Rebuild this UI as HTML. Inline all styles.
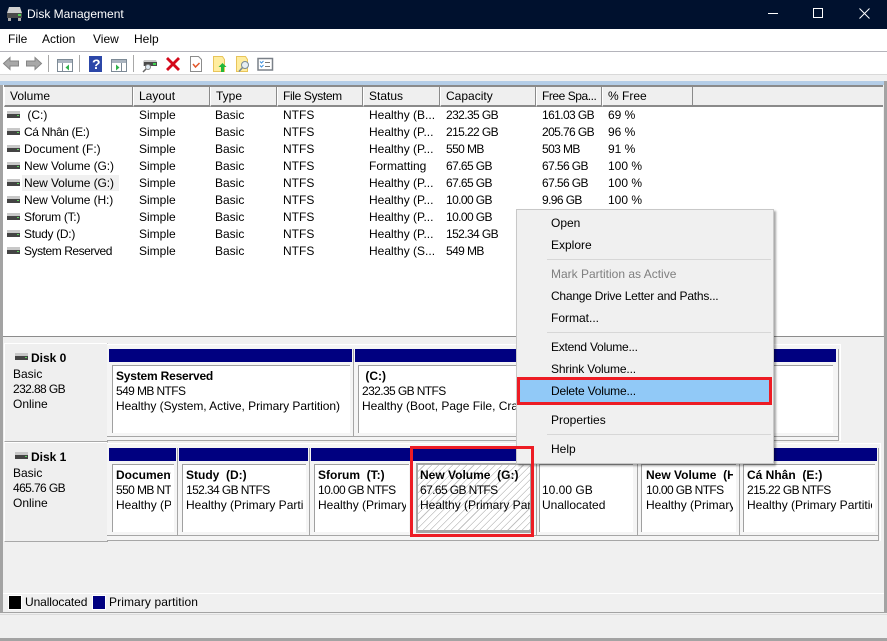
<!DOCTYPE html>
<html><head><meta charset="utf-8"><style>
html,body{margin:0;padding:0}
body{width:887px;height:641px;overflow:hidden;position:relative;background:#f0f0f0;font:12px/15px "Liberation Sans",sans-serif;color:#000}
div,svg{position:absolute}
.t{white-space:nowrap}
.h{top:87px;height:18px;background:#efefef;border-right:1px solid #8a8a8a;border-left:1px solid #fff;border-bottom:2px solid #8a8a8a;line-height:18px;white-space:nowrap;text-indent:5px}
.c{white-space:nowrap;height:15px}
.n{letter-spacing:-.6px}
.nv{background:#000080;height:13px}
.p{background:#fff;overflow:hidden;white-space:nowrap;border-left:1px solid #a0a0a0;border-top:1px solid #a0a0a0;box-sizing:border-box}
.p span{position:absolute;left:3px;right:3px;height:15px;overflow:hidden}
.v{position:absolute;width:1px;background:#a6a6a6}
.m{position:absolute;left:34px;white-space:nowrap}
.sp{position:absolute;left:30px;right:2px;height:1px;background:#d7d7d7}
</style></head><body>
<div style="left:0;top:0;width:887px;height:29px;background:#00112e"></div>
<svg style="left:6px;top:6px" width="17" height="16" viewBox="0 0 17 16"><path d="M3 1h11l2 6v3H1V7z" fill="#cfcfcf"/><rect x="1" y="7" width="15" height="5" fill="#4a4a4a"/><rect x="12" y="8" width="3" height="2" fill="#4fd04f"/><rect x="2" y="12" width="3" height="3" fill="#aaa"/><rect x="12" y="12" width="3" height="3" fill="#aaa"/></svg>
<div class="t" style="left:27px;top:6px;color:#fff;font-size:12px;line-height:16px">Disk Management</div>
<div style="left:768px;top:13px;width:10px;height:1px;background:#fff"></div>
<div style="left:813px;top:8px;width:8px;height:8px;border:1px solid #fff"></div>
<svg style="left:859px;top:8px" width="11" height="11"><path d="M.5.5l10 10M10.500.5l-10 10" stroke="#fff" fill="none"/></svg>

<div style="left:0;top:29px;width:887px;height:22px;background:#fff"></div>
<div class="t" style="left:8px;top:32px">File</div>
<div class="t" style="left:42px;top:32px">Action</div>
<div class="t" style="left:93px;top:32px">View</div>
<div class="t" style="left:134px;top:32px">Help</div>
<div style="left:0;top:51px;width:887px;height:1px;background:#b4b4bb"></div>
<div style="left:0;top:52px;width:887px;height:22px;background:#fff"></div>
<div style="left:0;top:74px;width:887px;height:1px;background:#d9d9d9"></div>

<svg style="left:0;top:52px" width="290" height="22" viewBox="0 0 290 22">
<path d="M3.500 11.500l6.500-6v3.500h8.500v5H10v3.500z" fill="#a8a8a8" stroke="#858585"/>
<path d="M41.500 11.500l-6.500-6v3.500h-8.500v5H35v3.500z" fill="#a8a8a8" stroke="#858585"/>
<path d="M48.500 3v17M79.500 3v17M133.500 3v17" stroke="#a8a8a8"/>
<rect x="57.500" y="7.500" width="15" height="12" fill="#fff" stroke="#7d8a96"/><rect x="58" y="8" width="14" height="3" fill="#aab4bf"/><path d="M62.500 11v8" stroke="#7d8a96"/><path d="M69 12.500v6l-3.500-3z" fill="#2fb04a"/>
<rect x="89" y="4" width="13" height="16" fill="#2c47a8"/><text x="92" y="17" fill="#fff" font-size="14" font-weight="bold" font-family="Liberation Sans">?</text>
<rect x="111.500" y="7.500" width="15" height="12" fill="#fff" stroke="#7d8a96"/><rect x="112" y="8" width="14" height="3" fill="#aab4bf"/><path d="M121.500 11v8" stroke="#7d8a96"/><path d="M116 12.500v6l3.500-3z" fill="#2fb04a"/>
<path d="M144 8h12l1 2v4h-14v-4z" fill="#c6c6c6"/><rect x="144" y="10" width="13" height="4" fill="#4a4a4a"/><rect x="153" y="11" width="3" height="2" fill="#3fd64f"/><circle cx="148" cy="15" r="2.500" fill="#dfeaf2" stroke="#888"/><path d="M146 17l-3 3" stroke="#666" stroke-width="1.500"/>
<path d="M168 5l5 5 5-5 2 2-5 5 5 5-2 2-5-5-5 5-2-2 5-5-5-5z" fill="#d4091b"/>
<path d="M190.500 4.500h8l3 3v12h-11z" fill="#fff" stroke="#8c8c8c"/><path d="M193 12l2.500 3 4-4" stroke="#e2572b" stroke-width="1.500" fill="none"/>
<path d="M213.500 4.500h9l2 3v12h-11z" fill="#ffed9f" stroke="#e8c45a"/><path d="M222.500 11l4 4H224v5h-3v-5h-2.500z" fill="#22b83a"/>
<path d="M236.500 4.500h9l2 3v12h-11z" fill="#ffed9f" stroke="#e8c45a"/><circle cx="245" cy="13" r="3.500" fill="#e6eef3" stroke="#7a8a94"/><path d="M242.500 15.500l-3.500 4" stroke="#7a8a94" stroke-width="1.500"/>
<rect x="258" y="6.500" width="14.500" height="11.500" fill="#fff" stroke="#7a8088" stroke-width="1.500"/><path d="M260 9.500l1.500 1.500 2-2M260 13.500l1.500 1.500 2-2" stroke="#3b8fdd" fill="none"/><path d="M265 10.500h5M265 14.500h5" stroke="#777"/>
</svg>

<div style="left:0;top:81px;width:3px;height:531px;background:#a3a3a3"></div>
<div style="left:884px;top:81px;width:3px;height:531px;background:#a3a3a3"></div>
<div style="left:0;top:81px;width:884px;height:4px;background:#b4cde7"></div>
<div style="left:3px;top:85px;width:880px;height:251px;background:#fff"></div>
<div style="left:4px;top:85px;width:879px;height:2px;background:#8a8a8a"></div>
<div style="left:4px;top:87px;width:879px;height:18px;background:#efefef;border-bottom:2px solid #8a8a8a"></div>
<div class="h" style="left:4px;width:127px">Volume</div>
<div class="h" style="left:133px;width:75px">Layout</div>
<div class="h" style="left:210px;width:65px">Type</div>
<div class="h" style="left:277px;width:84px;letter-spacing:-.35px">File System</div>
<div class="h" style="left:363px;width:75px">Status</div>
<div class="h" style="left:440px;width:94px">Capacity</div>
<div class="h" style="left:536px;width:64px;letter-spacing:-.45px">Free Spa...</div>
<div class="h" style="left:602px;width:89px">% Free</div>

<div style="left:22px;top:175px;width:97px;height:16px;background:#f0f0f0"></div>
<svg style="left:7px;top:108px" width="14" height="150" viewBox="0 0 14 150">
<g id="d"><rect y="3" width="13" height="3" fill="#c8c8c8"/><rect y="6" width="13" height="4" fill="#444"/><rect x="10" y="7" width="2" height="1" fill="#5fd05f"/></g>
<use href="#d" y="17"/><use href="#d" y="34"/><use href="#d" y="51"/><use href="#d" y="68"/><use href="#d" y="85"/><use href="#d" y="102"/><use href="#d" y="119"/><use href="#d" y="136"/>
</svg>

<div class="c" style="left:24px;top:108px">&nbsp;(C:)</div><div class="c" style="left:139px;top:108px">Simple</div><div class="c" style="left:215px;top:108px">Basic</div><div class="c" style="left:283px;top:108px">NTFS</div><div class="c" style="left:369px;top:108px">Healthy (B...</div><div class="c n" style="left:446px;top:108px">232.35 GB</div><div class="c n" style="left:542px;top:108px">161.03 GB</div><div class="c" style="left:608px;top:108px">69 %</div>
<div class="c" style="left:24px;top:125px;letter-spacing:-.4px">Cá Nhân (E:)</div><div class="c" style="left:139px;top:125px">Simple</div><div class="c" style="left:215px;top:125px">Basic</div><div class="c" style="left:283px;top:125px">NTFS</div><div class="c" style="left:369px;top:125px">Healthy (P...</div><div class="c n" style="left:446px;top:125px">215.22 GB</div><div class="c n" style="left:542px;top:125px">205.76 GB</div><div class="c" style="left:608px;top:125px">96 %</div>
<div class="c" style="left:24px;top:142px">Document (F:)</div><div class="c" style="left:139px;top:142px">Simple</div><div class="c" style="left:215px;top:142px">Basic</div><div class="c" style="left:283px;top:142px">NTFS</div><div class="c" style="left:369px;top:142px">Healthy (P...</div><div class="c n" style="left:446px;top:142px">550 MB</div><div class="c n" style="left:542px;top:142px">503 MB</div><div class="c" style="left:608px;top:142px">91 %</div>
<div class="c" style="left:24px;top:159px;letter-spacing:-.1px">New Volume (G:)</div><div class="c" style="left:139px;top:159px">Simple</div><div class="c" style="left:215px;top:159px">Basic</div><div class="c" style="left:283px;top:159px">NTFS</div><div class="c" style="left:369px;top:159px">Formatting</div><div class="c n" style="left:446px;top:159px">67.65 GB</div><div class="c n" style="left:542px;top:159px">67.56 GB</div><div class="c" style="left:608px;top:159px">100 %</div>
<div class="c" style="left:24px;top:176px;letter-spacing:-.1px">New Volume (G:)</div><div class="c" style="left:139px;top:176px">Simple</div><div class="c" style="left:215px;top:176px">Basic</div><div class="c" style="left:283px;top:176px">NTFS</div><div class="c" style="left:369px;top:176px">Healthy (P...</div><div class="c n" style="left:446px;top:176px">67.65 GB</div><div class="c n" style="left:542px;top:176px">67.56 GB</div><div class="c" style="left:608px;top:176px">100 %</div>
<div class="c" style="left:24px;top:193px;letter-spacing:-.1px">New Volume (H:)</div><div class="c" style="left:139px;top:193px">Simple</div><div class="c" style="left:215px;top:193px">Basic</div><div class="c" style="left:283px;top:193px">NTFS</div><div class="c" style="left:369px;top:193px">Healthy (P...</div><div class="c n" style="left:446px;top:193px">10.00 GB</div><div class="c n" style="left:542px;top:193px">9.96 GB</div><div class="c" style="left:608px;top:193px">100 %</div>
<div class="c" style="left:24px;top:210px;letter-spacing:-.3px">Sforum (T:)</div><div class="c" style="left:139px;top:210px">Simple</div><div class="c" style="left:215px;top:210px">Basic</div><div class="c" style="left:283px;top:210px">NTFS</div><div class="c" style="left:369px;top:210px">Healthy (P...</div><div class="c n" style="left:446px;top:210px">10.00 GB</div>
<div class="c" style="left:24px;top:227px;letter-spacing:-.3px">Study (D:)</div><div class="c" style="left:139px;top:227px">Simple</div><div class="c" style="left:215px;top:227px">Basic</div><div class="c" style="left:283px;top:227px">NTFS</div><div class="c" style="left:369px;top:227px">Healthy (P...</div><div class="c n" style="left:446px;top:227px">152.34 GB</div>
<div class="c" style="left:24px;top:244px;letter-spacing:-.45px">System Reserved</div><div class="c" style="left:139px;top:244px">Simple</div><div class="c" style="left:215px;top:244px">Basic</div><div class="c" style="left:283px;top:244px">NTFS</div><div class="c" style="left:369px;top:244px">Healthy (S...</div><div class="c n" style="left:446px;top:244px">549 MB</div>

<div style="left:3px;top:336px;width:881px;height:1px;background:#8c8c8c"></div>

<!-- disk labels -->
<div style="left:4px;top:343px;width:102px;height:97px;background:#efefef;border-top:1px solid #fff;border-left:1px solid #fff;border-right:1px solid #a8a8a8;border-bottom:1px solid #a8a8a8"></div>
<div style="left:4px;top:442px;width:102px;height:98px;background:#efefef;border-top:1px solid #fff;border-left:1px solid #fff;border-right:1px solid #a8a8a8;border-bottom:1px solid #a8a8a8"></div>
<svg style="left:15px;top:353px" width="14" height="8"><rect width="13" height="3" fill="#c8c8c8"/><rect y="3" width="13" height="4" fill="#444"/><rect x="10" y="4" width="2" height="1" fill="#5fd05f"/></svg>
<svg style="left:15px;top:452px" width="14" height="8"><rect width="13" height="3" fill="#c8c8c8"/><rect y="3" width="13" height="4" fill="#444"/><rect x="10" y="4" width="2" height="1" fill="#5fd05f"/></svg>
<div class="t" style="left:31px;top:351px;font-weight:bold">Disk 0</div>
<div class="t" style="left:13px;top:367px">Basic</div><div class="t n" style="left:13px;top:382px">232.88 GB</div><div class="t" style="left:13px;top:397px">Online</div>
<div class="t" style="left:31px;top:450px;font-weight:bold">Disk 1</div>
<div class="t" style="left:13px;top:466px">Basic</div><div class="t n" style="left:13px;top:481px">465.76 GB</div><div class="t" style="left:13px;top:496px">Online</div>

<!-- disk 0 map -->
<div style="left:107px;top:344px;width:733px;height:96px;background:#f5f5f5;border-top:1px solid #fff;border-right:1px solid #fff"></div>
<div class="v" style="left:353px;top:349px;height:88px"></div>
<div class="v" style="left:838px;top:349px;height:92px"></div>
<div style="left:107px;top:436px;width:731px;height:1px;background:#a6a6a6"></div>
<div style="left:107px;top:440px;width:732px;height:1px;background:#a6a6a6"></div>
<div class="nv" style="left:109px;top:349px;width:243px"></div>
<div class="nv" style="left:355px;top:349px;width:481px"></div>
<div class="p" style="left:112px;top:365px;width:238px;height:68px"><span style="top:3px;font-weight:bold;letter-spacing:-.2px">System Reserved</span><span class="n" style="top:18px">549 MB NTFS</span><span style="top:33px;letter-spacing:-.05px">Healthy (System, Active, Primary Partition)</span></div>
<div class="p" style="left:358px;top:365px;width:475px;height:68px"><span style="top:3px;font-weight:bold">&nbsp;(C:)</span><span class="n" style="top:18px">232.35 GB NTFS</span><span style="top:33px">Healthy (Boot, Page File, Crash Dump, Primary Partition)</span></div>

<!-- disk 1 map -->
<div style="left:107px;top:443px;width:773px;height:97px;background:#f5f5f5;border-top:1px solid #fff;border-right:1px solid #fff"></div>
<div class="v" style="left:177px;top:448px;height:88px"></div>
<div class="v" style="left:309px;top:448px;height:88px"></div>
<div class="v" style="left:536px;top:461px;height:75px"></div>
<div class="v" style="left:637px;top:461px;height:75px"></div>
<div class="v" style="left:739px;top:461px;height:75px"></div>
<div class="v" style="left:878px;top:448px;height:93px"></div>
<div style="left:107px;top:535px;width:771px;height:1px;background:#a6a6a6"></div>
<div style="left:107px;top:540px;width:772px;height:1px;background:#a6a6a6"></div>
<div class="nv" style="left:109px;top:448px;width:67px"></div>
<div class="nv" style="left:179px;top:448px;width:129px"></div>
<div class="nv" style="left:311px;top:448px;width:205px"></div>
<div class="nv" style="left:538px;top:448px;width:339px"></div>
<div class="p" style="left:112px;top:464px;width:62px;height:68px"><span style="top:3px;font-weight:bold">Document</span><span class="n" style="top:18px">550 MB NTFS</span><span style="top:33px">Healthy (P</span></div>
<div class="p" style="left:182px;top:464px;width:124px;height:68px"><span style="top:3px;font-weight:bold">Study&nbsp; (D:)</span><span class="n" style="top:18px">152.34 GB NTFS</span><span style="top:33px">Healthy (Primary Partition)</span></div>
<div class="p" style="left:314px;top:464px;width:95px;height:68px"><span style="top:3px;font-weight:bold">Sforum&nbsp; (T:)</span><span class="n" style="top:18px">10.00 GB NTFS</span><span style="top:33px">Healthy (Primary</span></div>
<div class="p" style="left:416px;top:463px;width:115px;height:70px;border:0;border-left:2px solid #a6a6a6;border-top:2px solid #a6a6a6;border-right:1px solid #a6a6a6;border-bottom:3px solid #a6a6a6;background:repeating-linear-gradient(135deg,#fff 0,#fff 4.200px,#c2c2c2 4.200px,#c2c2c2 5px)"><span style="left:2px;right:0;top:3px;font-weight:bold">New Volume&nbsp; (G:)</span><span class="n" style="left:2px;right:0;top:18px">67.65 GB NTFS</span><span style="left:2px;right:0;top:33px">Healthy (Primary Partition)</span></div>
<div class="p" style="left:539px;top:464px;width:94px;height:68px"><span style="left:2px;top:18px">10.00 GB</span><span style="left:2px;top:33px">Unallocated</span></div>
<div class="p" style="left:641px;top:464px;width:95px;height:68px"><span style="left:4px;top:3px;font-weight:bold">New Volume&nbsp; (H:)</span><span class="n" style="left:4px;top:18px">10.00 GB NTFS</span><span style="left:4px;top:33px">Healthy (Primary</span></div>
<div class="p" style="left:743px;top:464px;width:132px;height:68px"><span style="top:3px;font-weight:bold">Cá Nhân&nbsp; (E:)</span><span class="n" style="top:18px">215.22 GB NTFS</span><span style="top:33px">Healthy (Primary Partition)</span></div>

<!-- legend -->
<div style="left:3px;top:593px;width:881px;height:1px;background:#fff"></div>
<div style="left:9px;top:596px;width:12px;height:13px;background:#000;box-shadow:0 0 0 1px #fff"></div>
<div class="t" style="left:25px;top:595px;letter-spacing:-.1px">Unallocated</div>
<div style="left:93px;top:596px;width:12px;height:13px;background:#000080;box-shadow:0 0 0 1px #fff"></div>
<div class="t" style="left:109px;top:595px;letter-spacing:.1px">Primary partition</div>
<div style="left:0;top:612px;width:887px;height:1px;background:#a3a3a3"></div>
<div style="left:0;top:614px;width:887px;height:1px;background:#dcdcdc"></div>
<div style="left:0;top:638px;width:887px;height:3px;background:#a3a3a3"></div>

<!-- context menu -->
<div style="left:516px;top:209px;width:256px;height:253px;background:#f0f0f0;border:1px solid #c8c8c8;box-shadow:2px 2px 2px rgba(0,0,0,.35)">
<div style="left:2px;top:169px;width:250px;height:24px;background:#91c9f7"></div>
<div class="sp" style="top:49px"></div><div class="sp" style="top:122px"></div><div class="sp" style="top:224px"></div>
<div class="m" style="top:6px">Open</div>
<div class="m" style="top:28px">Explore</div>
<div class="m" style="top:57px;color:#7f7f7f">Mark Partition as Active</div>
<div class="m" style="top:79px;letter-spacing:-.23px">Change Drive Letter and Paths...</div>
<div class="m" style="top:101px">Format...</div>
<div class="m" style="top:130px;letter-spacing:-.25px">Extend Volume...</div>
<div class="m" style="top:152px;letter-spacing:-.15px">Shrink Volume...</div>
<div class="m" style="top:174px;letter-spacing:-.2px">Delete Volume...</div>
<div class="m" style="top:203px">Properties</div>
<div class="m" style="top:232px">Help</div>
</div>
<div style="left:517px;top:377px;width:249px;height:22px;border:3px solid #ed1c24"></div>
<div style="left:410px;top:446px;width:118px;height:85px;border:3px solid #ed1c24"></div>
</body></html>
